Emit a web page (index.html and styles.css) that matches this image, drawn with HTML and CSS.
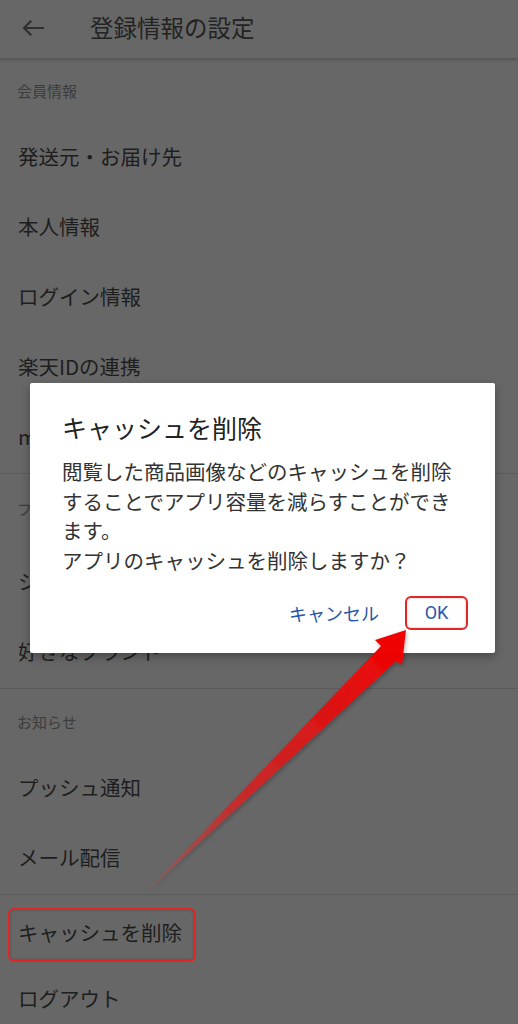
FILE: index.html
```html
<!DOCTYPE html>
<html lang="ja">
<head>
<meta charset="utf-8">
<title>登録情報の設定</title>
<link rel="stylesheet" href="styles.css">
</head>
<body>
<div class="screen">
  <header class="appbar">
    <svg class="back" width="22" height="16" viewBox="0 0 22 16" aria-hidden="true">
      <path d="M21 8H2.5M8.5 1.5L2 8l6.5 6.5" fill="none" stroke="#2f2f2f" stroke-width="2.2" stroke-linecap="square"/>
    </svg>
    <h1 class="title">登録情報の設定</h1>
  </header>

  <section class="group">
    <div class="group-title">会員情報</div>
    <div class="item">発送元・お届け先</div>
    <div class="item">本人情報</div>
    <div class="item">ログイン情報</div>
    <div class="item">楽天IDの連携</div>
    <div class="item">my Rakuten</div>
  </section>

  <section class="group group-tall">
    <div class="group-title">フリマ設定</div>
    <div class="item">ショップ設定</div>
    <div class="item">好きなブランド</div>
  </section>

  <section class="group">
    <div class="group-title">お知らせ</div>
    <div class="item">プッシュ通知</div>
    <div class="item">メール配信</div>
  </section>

  <section class="group group-plain">
    <div class="item item-marked">キャッシュを削除<span class="mark"></span></div>
    <div class="item">ログアウト</div>
  </section>

  <div class="dialog" role="dialog">
    <h2 class="dialog-title">キャッシュを削除</h2>
    <div class="dialog-body">
      <p>閲覧した商品画像などのキャッシュを削除することでアプリ容量を減らすことができます。</p>
      <p>アプリのキャッシュを削除しますか？</p>
    </div>
    <div class="dialog-actions">
      <span class="btn">キャンセル</span>
      <span class="btn btn-ok">OK</span>
    </div>
  </div>

  <svg class="pointer" width="518" height="1024" viewBox="0 0 518 1024" aria-hidden="true">
    <defs>
      <linearGradient id="ag" gradientUnits="userSpaceOnUse" x1="141" y1="897" x2="406" y2="630">
        <stop offset="0" stop-color="#b85050" stop-opacity="0.35"/>
        <stop offset="0.35" stop-color="#d42424" stop-opacity="0.85"/>
        <stop offset="1" stop-color="#f20000"/>
      </linearGradient>
      <filter id="ash" x="-20%" y="-20%" width="140%" height="140%">
        <feDropShadow dx="1" dy="2" stdDeviation="2" flood-color="#000" flood-opacity="0.3"/>
      </filter>
    </defs>
    <polygon points="406,630 375,640 381,646 141,897 396,661 402,665" fill="url(#ag)" filter="url(#ash)"/>
  </svg>
</div>
</body>
</html>
```
FILE: styles.css
```css
* { box-sizing: border-box; }
html, body { margin: 0; padding: 0; }
body {
  background: #676767;
  font-family: "Noto Sans CJK JP", "Noto Sans", Roboto, sans-serif;
  color: #1e1e1e;
}
.screen {
  position: relative;
  width: 518px;
  height: 1024px;
  overflow: hidden;
  background: #676767;
}
.appbar {
  height: 58px;
  display: flex;
  align-items: center;
  padding-left: 22px;
  box-shadow: 0 2px 3px rgba(0, 0, 0, 0.18);
  position: relative;
}
.back { display: block; margin-top: -2px; }
.title {
  margin: 0 0 0 46px;
  font-size: 23.5px;
  font-weight: 400;
  color: #232323;
  line-height: 1;
  margin-top: -3px;
}
.group { border-top: 1px solid #5b5b5b; }
.group:first-of-type { border-top: none; }
.group-title {
  height: 65px;
  display: flex;
  align-items: center;
  padding-left: 17px;
  font-size: 15px;
  color: #3c3c3c;
  padding-bottom: 1px;
}
.group-tall .group-title { height: 74px; padding-bottom: 6px; }
.item {
  height: 70px;
  display: flex;
  align-items: center;
  padding-left: 18px;
  padding-bottom: 4px;
  font-size: 20.5px;
  color: #1e1e1e;
  position: relative;
}
.group-plain .item-marked { padding-top: 4px; padding-bottom: 0; }
.mark {
  position: absolute;
  left: 8px;
  top: 13px;
  width: 188px;
  height: 54px;
  border: 2px solid #e02626;
  border-radius: 6px;
  box-shadow: inset 0 0 3px rgba(0, 0, 0, 0.25);
}

.dialog {
  position: absolute;
  left: 30px;
  top: 383px;
  width: 465px;
  height: 270px;
  background: #fff;
  border-radius: 2px;
  box-shadow: 0 4px 10px rgba(0, 0, 0, 0.3);
  padding: 27px 27px 0 32px;
}
.dialog-title {
  margin: 0;
  font-size: 25px;
  font-weight: 400;
  line-height: 35px;
  color: #222;
}
.dialog-body {
  margin-top: 12px;
  width: 402px;
  font-size: 20.5px;
  line-height: 29.5px;
  color: #333;
}
.dialog-body p { margin: 0; }
.dialog-actions {
  margin-top: 21px;
  display: flex;
  justify-content: flex-end;
  align-items: center;
  gap: 26px;
}
.btn {
  font-size: 18px;
  color: #2a58a8;
  line-height: 34px;
}
.btn-ok {
  font-family: Roboto, "Noto Sans", sans-serif;
  width: 63px;
  height: 34px;
  text-align: center;
  border: 2px solid #e02626;
  border-radius: 6px;
  line-height: 30px;
  box-shadow: inset 0 0 3px rgba(0, 0, 0, 0.2);
}
.pointer {
  position: absolute;
  left: 0;
  top: 0;
  pointer-events: none;
}
```
